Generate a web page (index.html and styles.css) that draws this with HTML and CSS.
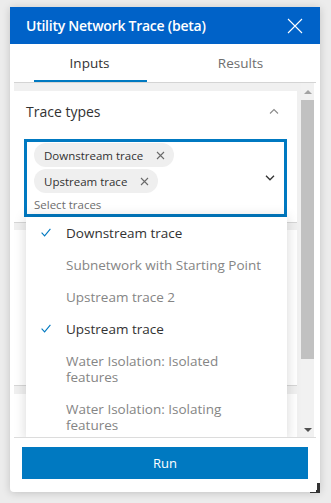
FILE: index.html
```html
<!DOCTYPE html>
<html lang="en">
<head>
<meta charset="utf-8">
<title>Utility Network Trace</title>
<link rel="stylesheet" href="styles.css">
</head>
<body>
<div class="panel">
  <div class="header">
    <span class="title">Utility Network Trace (beta)</span>
    <svg class="close" width="16" height="16" viewBox="0 0 16 16"><path d="M1 1L15 15M15 1L1 15" stroke="#fff" stroke-width="1.1" fill="none"/></svg>
  </div>
  <div class="tabs">
    <div class="tab active">Inputs</div>
    <div class="tab">Results</div>
  </div>
  <div class="scroll">
    <div class="content">
      <div class="card card1">
        <div class="card-head">
          <span class="card-title">Trace types</span>
          <svg width="10" height="6" viewBox="0 0 10 6"><path d="M1 5.5L5 1.5L9 5.5" stroke="#8a8a8a" stroke-width="1.1" fill="none"/></svg>
        </div>
        <div class="select">
          <div class="select-main">
            <div class="chip"><span>Downstream trace</span><svg width="9" height="9" viewBox="0 0 9 9"><path d="M1 1L8 8M8 1L1 8" stroke="#6a6a6a" stroke-width="1.1" fill="none"/></svg></div>
            <div class="chip"><span>Upstream trace</span><svg width="9" height="9" viewBox="0 0 9 9"><path d="M1 1L8 8M8 1L1 8" stroke="#6a6a6a" stroke-width="1.1" fill="none"/></svg></div>
            <div class="placeholder">Select traces</div>
          </div>
          <svg class="chev-down" width="10" height="6" viewBox="0 0 10 6"><path d="M1 0.8L5 4.8L9 0.8" stroke="#323232" stroke-width="1.3" fill="none"/></svg>
        </div>
      </div>
      <div class="card card2"></div>
      <div class="card card3"></div>
    </div>
    <div class="scrollbar">
      <div class="sb-btn"><span class="arrow-up"></span></div>
      <div class="sb-thumb"></div>
      <div class="sb-track"></div>
      <div class="sb-btn"><span class="arrow-down"></span></div>
    </div>
    <div class="dropdown">
      <div class="item selected"><span class="check"><svg width="10" height="9" viewBox="0 0 10 9"><path d="M0.6 4.6L3.6 7.8L9.4 0.8" stroke="#0079c1" stroke-width="1.1" fill="none"/></svg></span><span class="label">Downstream trace</span></div>
      <div class="item"><span class="check"></span><span class="label">Subnetwork with Starting Point</span></div>
      <div class="item"><span class="check"></span><span class="label">Upstream trace 2</span></div>
      <div class="item selected"><span class="check"><svg width="10" height="9" viewBox="0 0 10 9"><path d="M0.6 4.6L3.6 7.8L9.4 0.8" stroke="#0079c1" stroke-width="1.1" fill="none"/></svg></span><span class="label">Upstream trace</span></div>
      <div class="item"><span class="check"></span><span class="label">Water Isolation: Isolated features</span></div>
      <div class="item"><span class="check"></span><span class="label">Water Isolation: Isolating features</span></div>
    </div>
  </div>
  <div class="footer">
    <button class="run">Run</button>
  </div>
  <div class="resize"></div>
</div>
</body>
</html>
```
FILE: styles.css
```css
* { box-sizing: border-box; }
html, body { margin: 0; height: 100%; }
body {
  background: #ececec;
  padding: 7px 0 0 10px;
  font-family: "Open Sans", "Liberation Sans", sans-serif;
  color: #323232;
  overflow: hidden;
}
.panel {
  position: relative;
  width: 310px;
  height: 485px;
  background: #fff;
  border-radius: 0 0 4px 4px;
  box-shadow: 0 1px 8px rgba(0,0,0,0.18);
  display: flex;
  flex-direction: column;
}
.header {
  height: 37px;
  flex: none;
  background: #0062c8;
  display: flex;
  align-items: center;
  justify-content: space-between;
  padding: 0 17px 0 16px;
}
.title {
  color: #fff;
  font-size: 14px;
  font-weight: 600;
  letter-spacing: -0.25px;
}
.close { display: block; }
.tabs {
  flex: none;
  display: flex;
  height: 39px;
  margin: 0 4px;
  border-bottom: 1px solid #d4d4d4;
}
.tab {
  flex: 1;
  position: relative;
  text-align: center;
  font-size: 13.5px;
  line-height: 38px;
  color: #6e6e6e;
}
.tab.active { color: #323232; }
.tab.active::after {
  content: "";
  position: absolute;
  left: 20px;
  right: 18px;
  bottom: 0;
  height: 2px;
  background: #0079c1;
}
.scroll {
  position: relative;
  flex: 1;
  display: flex;
  margin: 0 4px;
  overflow: hidden;
  background: #fff;
}
.content {
  flex: 1;
  background: #f0f0f0;
  padding: 8px 4px 0 0;
}
.card {
  background: #fff;
  border-bottom: 1px solid #d6d6d6;
}
.card1 { padding: 0 10px 5px; }
.card2 { margin-top: 7px; height: 156px; }
.card3 { margin-top: 8px; height: 60px; }
.card-head {
  height: 40px;
  display: flex;
  align-items: center;
  justify-content: space-between;
  padding: 0 8px 0 2px;
}
.card-head svg { display: block; }
.card-title { font-size: 14px; color: #323232; }
.select {
  margin-top: 8px;
  height: 78px;
  border: 3px solid #0079c1;
  display: flex;
  align-items: center;
  padding: 1px 9px 1px 7px;
}
.select-main {
  flex: 1;
  align-self: stretch;
  display: flex;
  flex-direction: column;
  align-items: flex-start;
  gap: 2px;
}
.chip {
  height: 24px;
  border-radius: 12px;
  background: #efefef;
  display: flex;
  align-items: center;
  gap: 13px;
  padding: 0 9px 0 10px;
  font-size: 11.5px;
  color: #323232;
}
.chip svg { display: block; }
.placeholder {
  margin-top: 2px;
  font-size: 11.5px;
  line-height: 16px;
  color: #6e6e6e;
}
.chev-down { display: block; }
.scrollbar {
  flex: none;
  width: 13px;
  margin-right: 2px;
  background: #f1f1f1;
  display: flex;
  flex-direction: column;
}
.sb-btn {
  height: 15px;
  display: flex;
  align-items: center;
  justify-content: center;
}
.sb-btn:first-child { height: 17px; }
.arrow-up {
  width: 0; height: 0;
  border-left: 4px solid transparent;
  border-right: 4px solid transparent;
  border-bottom: 4px solid #a3a3a3;
}
.arrow-down {
  width: 0; height: 0;
  border-left: 4px solid transparent;
  border-right: 4px solid transparent;
  border-top: 4px solid #505050;
}
.sb-thumb { height: 259px; background: #c1c1c1; }
.sb-track { flex: 1; }
.dropdown {
  position: absolute;
  left: 12px;
  top: 134px;
  width: 261px;
  background: #fff;
  box-shadow: 0 0 12px rgba(0,0,0,0.16);
}
.item {
  display: flex;
  padding: 8px 20px 8px 0;
  font-size: 13.5px;
  line-height: 16px;
  color: #858585;
}
.item.selected { color: #323232; font-weight: 500; }
.check {
  flex: none;
  width: 40px;
  padding-left: 15px;
  padding-top: 3px;
}
.check svg { display: block; }
.footer {
  flex: none;
  margin: 0 4px;
  border-top: 1px solid #dcdcdc;
  padding: 9px 8px 13px;
  background: #fff;
  position: relative;
  z-index: 1;
}
.run {
  display: block;
  width: 100%;
  height: 32px;
  border: 0;
  background: #0079c1;
  color: #fff;
  font-family: inherit;
  font-size: 13px;
}
.resize {
  position: absolute;
  right: 0;
  bottom: -1px;
  width: 10px;
  height: 10px;
  border-right: 3px solid #333;
  border-bottom: 3px solid #333;
}
```
